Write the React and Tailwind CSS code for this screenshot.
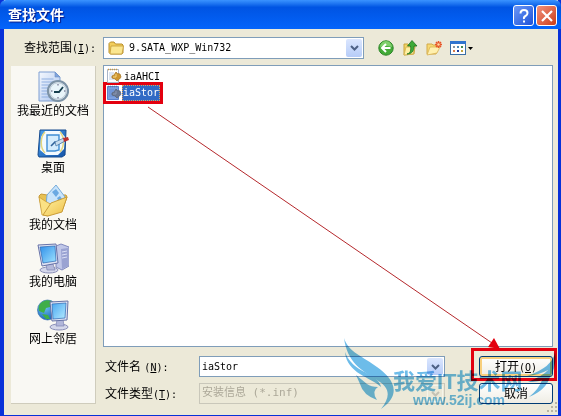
import { useState } from "react";

const RecentIcon = () => (
    <svg viewBox="0 0 32 32" className="size-8">
        <defs>
            <linearGradient id="recentPage" x1="0" y1="0" x2="1" y2="1">
                <stop offset="0" stopColor="#f4f8fe" />
                <stop offset="1" stopColor="#a9c3ee" />
            </linearGradient>
        </defs>
        <path d="M2 1h16l5 5v24H2z" fill="url(#recentPage)" stroke="#7f9fd2" />
        <path d="M18 1v5h5z" fill="#7fa3dc" stroke="#6d90c8" strokeWidth=".6" />
        <path d="M4.500 8h12M4.500 11h15M4.500 14h9M4.500 17h7M4.500 20h6M4.500 23h7M4.500 26h9" stroke="#8fafe0" />
        <circle cx="21" cy="20" r="10" fill="#eef4f8" stroke="#7d93a6" strokeWidth="2.200" />
        <circle cx="21" cy="20" r="8.200" fill="#e9f5fa" stroke="#bccad6" />
        <path d="M21 13v1.500M21 26v1.500M14 20h1.500M27 20h1.500" stroke="#557" />
        <path d="M17 21h5l4-5" fill="none" stroke="#163f4e" strokeWidth="1.800" />
    </svg>
);

const DesktopIcon = () => (
    <svg viewBox="0 0 32 32" className="size-8">
        <defs>
            <linearGradient id="deskFrame" x1="0" y1="0" x2="1" y2="1">
                <stop offset="0" stopColor="#4aa0ee" />
                <stop offset="1" stopColor="#1454a8" />
            </linearGradient>
        </defs>
        <path d="M3 2h26l-1 25-3 2H2L1 27z" fill="url(#deskFrame)" stroke="#164a8d" />
        <path d="M8 3h15l5 6-1 12-6 6H9l-6-5L4 9z" fill="#f3faff" />
        <path d="M8 4c-5 5-5 16 0 21M23 4c4 4 5 14 0 20" stroke="#e4d67e" fill="none" strokeWidth="1.500" />
        <path d="M10 7h12v15l-4 1h-8z" fill="#d4ecfd" stroke="#3f8dd4" strokeWidth="1.400" />
        <path d="M14 18l4-4 3 2 7-4" fill="none" stroke="#2f6199" strokeWidth="1.600" />
        <path d="M18 14l9-4 1 3-9 5z" fill="#c8dcec" stroke="#4172a3" strokeWidth=".7" />
        <path d="M26 10l5-1 1 3-5 2z" fill="#bd2f2f" />
    </svg>
);

const DocumentsIcon = () => (
    <svg viewBox="0 0 32 32" className="size-8">
        <defs>
            <linearGradient id="docsFolder" x1="0" y1="0" x2="1" y2="1">
                <stop offset="0" stopColor="#fff3a4" />
                <stop offset="1" stopColor="#eebf48" />
            </linearGradient>
        </defs>
        <path d="M2 11l2-2 6 1 19 0 1 2-5 14H5z" fill="#e8c152" stroke="#c89a36" />
        <path d="M10 10L19 0l9 12-6 9-13 0z" fill="#c9e4fb" stroke="#76abd9" />
        <path d="M15 7l4-3 3 4-3 4zM20 13l3-2 2 3-3 3z" fill="#6ba9e2" />
        <path d="M2 12l3 18 6 1 6-10-9-5z" fill="#fbe284" stroke="#ca9d38" strokeWidth=".8" />
        <path d="M6 30l8-12 16-6-5 15-14 4z" fill="url(#docsFolder)" stroke="#ca9d38" />
    </svg>
);

const ComputerIcon = () => (
    <svg viewBox="0 0 32 32" className="size-8">
        <defs>
            <linearGradient id="pcScreen" x1="0" y1="0" x2="1" y2="1">
                <stop offset="0" stopColor="#2f8fe9" />
                <stop offset="1" stopColor="#9fe3ff" />
            </linearGradient>
        </defs>
        <path d="M19 4l5-2 8 3v19l-7 4-6-3z" fill="#c0c7e8" stroke="#8089bd" />
        <path d="M24 7l7-1v18l-6 3z" fill="#9aa3d2" />
        <path d="M25 10l5-1M25 13l5-1M25 16l5-1" stroke="#dbe0f6" />
        <ellipse cx="12" cy="28" rx="9" ry="3" fill="#d4d7ea" stroke="#8b8fb8" />
        <path d="M9 22h7l2 6h-8z" fill="#b4b9da" stroke="#8085b3" strokeWidth=".7" />
        <path d="M1 3l18-1 2 19-16 3z" fill="#dfe3f3" stroke="#6772a8" />
        <path d="M3 5l15-1 1 15-13 2z" fill="url(#pcScreen)" stroke="#2d67b1" strokeWidth=".7" />
    </svg>
);

const NetworkIcon = () => (
    <svg viewBox="0 0 32 32" className="size-8">
        <defs>
            <radialGradient id="netGlobe" cx=".35" cy=".3" r=".8">
                <stop offset="0" stopColor="#71cdf7" />
                <stop offset="1" stopColor="#1459b3" />
            </radialGradient>
            <linearGradient id="netScreen" x1="0" y1="0" x2="1" y2="1">
                <stop offset="0" stopColor="#48a7f1" />
                <stop offset="1" stopColor="#b5ebff" />
            </linearGradient>
        </defs>
        <circle cx="10.500" cy="11" r="10" fill="url(#netGlobe)" stroke="#2867a4" strokeWidth=".6" />
        <path d="M5 3c5-3 9-2 11 1l-3 4-4 1-2 5-5-2c-1-4 0-7 3-9zM5 15l6 1 2 4-4 0z" fill="#3fae49" />
        <ellipse cx="22" cy="28" rx="9" ry="3" fill="#d4d7ea" stroke="#8b8fb8" />
        <path d="M20 20h6l1 7h-8z" fill="#b1b6da" stroke="#8085b3" strokeWidth=".7" />
        <path d="M13 3l18-1-1 19-15 1z" fill="#e0e4f5" stroke="#6672a6" />
        <path d="M15 5l14-1-1 15-12 1z" fill="url(#netScreen)" stroke="#2d67b1" strokeWidth=".7" />
    </svg>
);

const BackIcon = () => (
    <svg viewBox="0 0 16 16" className="size-4">
        <circle cx="8" cy="8" r="7.200" fill="#43ab37" stroke="#2c8527" />
        <path d="M2 7a6 6 0 0 1 12 0q-6-2-12 0z" fill="#7fcf6c" />
        <path d="M12.500 8H4M8 4L4 8l4 4" fill="none" stroke="#fff" strokeWidth="2" />
    </svg>
);

const UpIcon = () => (
    <svg viewBox="0 0 16 16" className="size-4">
        <path d="M2 4h4l1 1h6l-1 9-10 1z" fill="#f3d466" stroke="#c9a33c" />
        <path d="M4 7h9l-2 7-9 1z" fill="#fff0a3" stroke="#cfaa45" strokeWidth=".7" />
        <path d="M5 14c4-1 4-4 3.500-8H5.500L10 .5 15 6h-3c0 5-2 8-7 8z" fill="#3eaa38" stroke="#1f7222" strokeWidth=".8" />
    </svg>
);

const NewFolderIcon = () => (
    <svg viewBox="0 0 16 16" className="size-4">
        <path d="M1 4h5l1 1h5v3l-2 6H1z" fill="#f7d973" stroke="#d2a94b" />
        <path d="M4 7h10l-3 6-10 2z" fill="#fff0ae" stroke="#d8b254" strokeWidth=".8" />
        <path d="M12.500 1v7M9 4.500h7M10 2l5 5M15 2l-5 5" stroke="#e8562a" strokeWidth="1.500" />
        <circle cx="12.500" cy="4.500" r="1.200" fill="#ffd9a2" />
    </svg>
);

const ViewIcon = () => (
    <svg viewBox="0 0 16 16" className="size-4">
        <rect x=".5" y="1.500" width="15" height="13" fill="#fff" stroke="#3a6ea5" />
        <path d="M0 1h16v3H0z" fill="#3175cf" />
        <path d="M3 6h2v2H3z" fill="#8b95a0" />
        <path d="M7 6h2v2H7z" fill="#4d88b5" />
        <path d="M11 6h2v2h-2z" fill="#43894f" />
        <path d="M3 10h2v2H3z" fill="#d97b4a" />
        <path d="M7 10h2v2H7z" fill="#1c3a9c" />
        <path d="M11 10h2v2h-2z" fill="#c2a33c" />
    </svg>
);

const FolderIcon = () => (
    <svg viewBox="0 0 16 16" className="size-4">
        <path d="M1 3.500L2.500 2H6l1.500 2H14l1 1v8l-1.500 1h-11L1 12.500z" fill="#f2cd5c" stroke="#b98f2d" />
        <path d="M3 6h12.500L14 14H2z" fill="#fbe68f" stroke="#c59c38" strokeWidth=".8" />
    </svg>
);

const InfIcon = ({ selected }) => (
    <svg viewBox="0 0 16 16" className="size-4">
        <path d="M1.500 1.500h11v13h-11z" fill={selected ? "#7da0e0" : "#fff"} stroke={selected ? "#5c82cc" : "#a9b5c9"} />
        <path d="M2 1.500h10" stroke={selected ? "#5878a8" : "#c9983b"} strokeWidth="1.500" strokeDasharray="1 1" />
        <path d="M3 5h5M3 7h4M3 9h4M3 11h5" stroke={selected ? "#668bd2" : "#b9cbe4"} />
        <path d="M10 4l1.500 1.500L14 6l1 3-1.500 2L11 13l-2-2-3-1V8l2-1z" fill={selected ? "#6a7792" : "#cf962f"} stroke={selected ? "#5d6778" : "#a87a2e"} strokeWidth=".8" />
        <path d="M7 9h3V6" fill="none" stroke={selected ? "#8b98b4" : "#f3d683"} />
    </svg>
);

const Chevron = ({ muted }) => (
    <svg viewBox="0 0 9 6" className="w-[9px]">
        <path d="M1 1l3.500 3.500L8 1" fill="none" stroke={muted ? "#c4c2b4" : "#4d6185"} strokeWidth="2" />
    </svg>
);

// Latin text in the dialog is half the width of a Chinese glyph
const Latin = ({ children }) => (
    <span className="font-['DejaVu_Sans_Mono','Noto_Sans_CJK_SC',monospace] text-[10px]">{children}</span>
);

const Accel = ({ letter, colon }) => (
    <Latin>
        (<u>{letter}</u>){colon && ":"}
    </Latin>
);

const places = [
    { name: "我最近的文档", Icon: RecentIcon },
    { name: "桌面", Icon: DesktopIcon },
    { name: "我的文档", Icon: DocumentsIcon },
    { name: "我的电脑", Icon: ComputerIcon },
    { name: "网上邻居", Icon: NetworkIcon },
];

const Watermark = () => (
    <div className="pointer-events-none absolute right-8 bottom-[5px] flex w-[183px] items-end text-[#2f9fe0] opacity-70 mix-blend-multiply">
        <svg viewBox="0 0 54 72" className="h-[72px] w-[54px] shrink-0" fill="currentColor">
            <path d="M1 0C5 14 21 19 34 29C50 40 60 56 38 71C48 58 47 50 34 42C19 33 4 24 1 0z" />
            <path d="M2 14C8 30 22 33 32 40Q37 44 38 49C28 39 4 36 2 14z" />
            <path d="M13 37L24 46Q28 49 35 49Q28 53 34 62Q20 57 17 46z" />
        </svg>
        <div className="-ml-1 pb-1 font-['Liberation_Sans','Noto_Sans_CJK_SC',sans-serif] font-bold whitespace-nowrap">
            <div className="text-[22px] leading-6">我爱IT技术网</div>
            <div className="pl-5 text-[14px] leading-3">www.52ij.com</div>
        </div>
        <svg viewBox="0 0 30 46" className="absolute -right-[30px] bottom-3 h-[46px] w-[30px]" fill="currentColor">
            <path d="M29 0Q27 15 1 24Q13 23 22 18Q18 23 2 30Q11 30 16 28Q13 37 3 45Q20 38 24 25Q31 14 29 0z" />
        </svg>
    </div>
);

export default function App() {
    const [fileName, setFileName] = useState("iaStor");

    return (
        <div className="relative flex min-h-screen flex-col border-r-3 border-b border-l-4 border-[#0831d9] bg-[#ece9d8] font-['Liberation_Sans','Noto_Sans_CJK_SC',sans-serif] text-xs text-black">
            <header className="-mr-[3px] -ml-1 flex h-[29px] items-center justify-between rounded-t-md bg-linear-to-b from-[#3a93ff] via-[#0054e3] via-25% to-[#0464fb] pr-1 pl-2">
                <h1 className="text-sm font-bold text-white [text-shadow:1px_1px_1px_#0a1883]">查找文件</h1>
                <div className="flex gap-0.5 pt-0.5">
                    <button aria-label="帮助" className="flex size-[21px] items-center justify-center rounded-[3px] border border-white bg-linear-to-br from-[#6c97f5] to-[#1d50d8]">
                        <svg viewBox="0 0 16 16" className="size-4">
                            <path d="M4.500 5.500Q4.500 2 8 2t3.500 3Q11.500 7 9.500 8T8 11M8 12.500v2" fill="none" stroke="#fff" strokeWidth="2" />
                        </svg>
                    </button>
                    <button aria-label="关闭" className="flex size-[21px] items-center justify-center rounded-[3px] border border-white bg-linear-to-br from-[#f0907a] to-[#cc3a10]">
                        <svg viewBox="0 0 16 16" className="size-4">
                            <path d="M3 3l10 10M13 3L3 13" stroke="#fff" strokeWidth="2.200" />
                        </svg>
                    </button>
                </div>
            </header>

            <div className="flex items-center pt-2 pr-1">
                <label htmlFor="look-in" className="w-[99px] pl-5 whitespace-nowrap">
                    查找范围<Accel letter="I" colon />
                </label>
                <div className="relative mr-[14px] h-[22px] flex-1">
                    <select
                        id="look-in"
                        className="size-full appearance-none border border-[#7f9db9] bg-white pl-[25px] font-['DejaVu_Sans_Mono',monospace] text-[10px]"
                    >
                        <option>9.SATA_WXP_Win732</option>
                    </select>
                    <span className="pointer-events-none absolute top-[3px] left-[5px]">
                        <FolderIcon />
                    </span>
                    <span className="pointer-events-none absolute inset-y-0.5 right-0.5 flex w-4 items-center justify-center rounded-xs bg-linear-to-b from-[#dbe6fe] to-[#b6ccf8]">
                        <Chevron />
                    </span>
                </div>
                <div className="flex w-44 items-center gap-2">
                    <button aria-label="后退"><BackIcon /></button>
                    <button aria-label="向上一级"><UpIcon /></button>
                    <button aria-label="新建文件夹"><NewFolderIcon /></button>
                    <button aria-label="查看" className="flex items-center gap-0.5">
                        <ViewIcon />
                        <svg viewBox="0 0 5 3" className="w-[5px]">
                            <path d="M0 0h5L2.500 3z" />
                        </svg>
                    </button>
                </div>
            </div>

            <div className="flex flex-1 gap-[7px] pt-[6px] pr-[5px] pb-[11px] pl-[7px]">
                <nav className="mt-px flex w-[85px] flex-col gap-[9px] border-r border-b border-[#cfccbc] bg-[#f9f8f3] pt-[5px]">
                    {places.map(({ name, Icon }) => (
                        <button key={name} className="flex flex-col items-center">
                            <Icon />
                            <span className="leading-4 whitespace-nowrap">{name}</span>
                        </button>
                    ))}
                </nav>

                <div className="flex flex-1 flex-col">
                    <ul className="flex-1 border border-[#7f9db9] bg-white pt-0.5">
                        <li>
                            <button className="flex h-4 items-center pl-0.5">
                                <InfIcon />
                                <span className="pl-0.5"><Latin>iaAHCI</Latin></span>
                            </button>
                        </li>
                        <li>
                            <button className="-mt-0.5 -ml-px flex h-[22px] items-center border-3 border-[#e3000f]">
                                <InfIcon selected />
                                <span className="flex h-4 items-center border border-dotted border-[#d9a25a] bg-[#316ac5] text-white">
                                    <Latin>iaStor</Latin>
                                </span>
                            </button>
                        </li>
                    </ul>

                    <div className="mt-[9px] flex items-center">
                        <label htmlFor="file-name" className="w-24 pl-0.5 whitespace-nowrap">
                            文件名 <Accel letter="N" colon />
                        </label>
                        <div className="flex h-[21px] flex-1 items-center border border-[#7f9db9] bg-white pr-px">
                            <input
                                id="file-name"
                                value={fileName}
                                onChange={(e) => setFileName(e.target.value)}
                                className="min-w-0 flex-1 pl-0.5 font-['DejaVu_Sans_Mono',monospace] text-[10px] outline-none"
                            />
                            <button aria-label="显示列表" className="flex h-[17px] w-4 items-center justify-center rounded-xs bg-linear-to-b from-[#dbe6fe] to-[#b6ccf8]">
                                <Chevron />
                            </button>
                        </div>
                        <div className="relative ml-[34px] w-[74px]">
                            <button className="h-[21px] w-full rounded-[3px] border border-[#003c74] bg-linear-to-b from-white to-[#efede4] shadow-[inset_0_0_0_2px_#f8cf7c]">
                                打开<Accel letter="O" />
                            </button>
                            <span className="pointer-events-none absolute -top-2 -right-1 -bottom-1 -left-2 border-3 border-[#e3000f]" />
                        </div>
                    </div>

                    <div className="mt-[6px] flex items-center">
                        <label htmlFor="file-type" className="w-24 pl-0.5 whitespace-nowrap">
                            文件类型<Accel letter="T" colon />
                        </label>
                        <div className="relative h-[21px] flex-1">
                            <select
                                id="file-type"
                                disabled
                                className="size-full appearance-none border border-[#c9c7ba] bg-[#ece9d8] pl-0.5 font-['DejaVu_Sans_Mono','Noto_Sans_CJK_SC',monospace] text-[11px] text-[#aca899] opacity-100"
                            >
                                <option>安装信息 (*.inf)</option>
                            </select>
                            <span className="pointer-events-none absolute inset-y-0.5 right-0.5 flex w-4 items-center justify-center rounded-xs border border-[#f5f4ea]">
                                <Chevron muted />
                            </span>
                        </div>
                        <button className="ml-[34px] h-[21px] w-[74px] rounded-[3px] border border-[#003c74] bg-linear-to-b from-white to-[#efede4]">
                            取消
                        </button>
                    </div>
                </div>
            </div>

            <svg viewBox="0 0 11 11" className="pointer-events-none absolute right-0 bottom-0.5 size-[11px]" fill="#b8b4a3">
                <path d="M8 0h2v2H8zM4 4h2v2H4zM8 4h2v2H8zM0 8h2v2H0zM4 8h2v2H4zM8 8h2v2H8z" />
            </svg>

            <Watermark />

            {/* pointer from the selected file to the open button */}
            <svg viewBox="0 0 554 415" preserveAspectRatio="none" className="pointer-events-none absolute inset-0 size-full">
                <path d="M144 107L488 343" stroke="#b5282c" />
                <path d="M496 349L484 347L490 338z" fill="#e3000f" />
            </svg>
        </div>
    );
}
